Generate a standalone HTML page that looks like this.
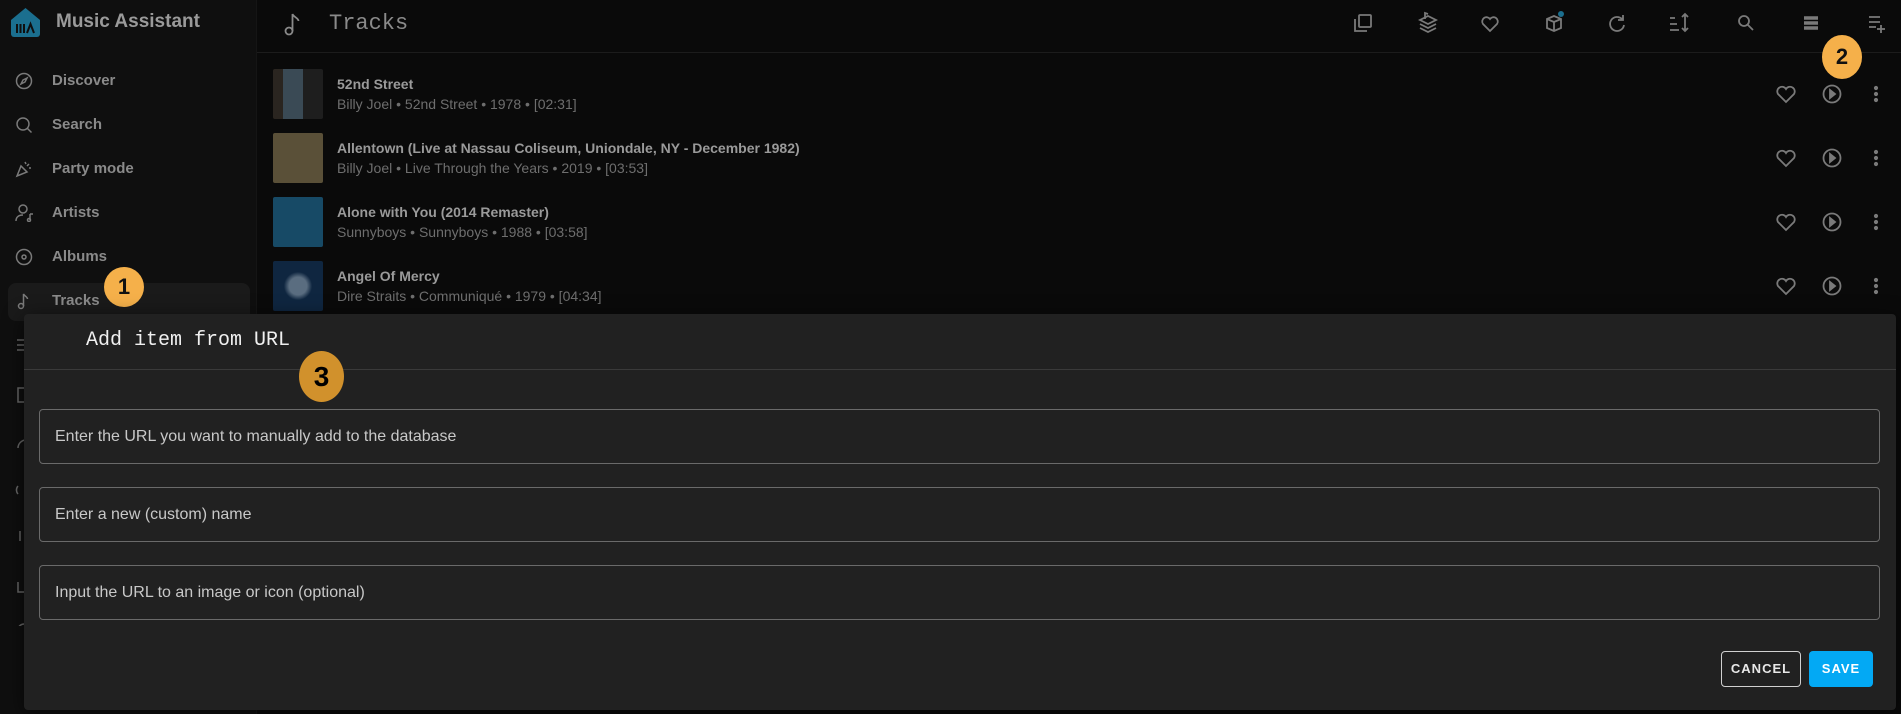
<!DOCTYPE html>
<html><head><meta charset="utf-8"><style>
*{margin:0;padding:0;box-sizing:border-box}
body{width:1901px;height:714px;background:#0a0a0a;font-family:"Liberation Sans",sans-serif;position:relative;overflow:hidden}
.abs{position:absolute}
.side{left:0;top:0;width:257px;height:714px;background:#0f0f0f;border-right:1px solid #151515}
.nav{position:absolute;left:52px;font-size:15px;font-weight:bold;color:#8a8a8a}
.badge{position:absolute;border-radius:50%;background:#f5b04a;color:#111;font-weight:bold;display:flex;align-items:center;justify-content:center;font-family:"Liberation Sans",sans-serif}
.thumb{position:absolute;left:273px;width:50px;height:50px;border-radius:2px}
.t1{position:absolute;left:337px;font-size:14px;font-weight:bold;color:#9a9a9a}
.t2{position:absolute;left:337px;font-size:14px;color:#6e6e6e}
svg{position:absolute}
.inp{position:absolute;left:39px;width:1841px;height:55px;border:1px solid #6a6a6a;border-radius:4px;font-size:16px;color:#c8c8c8;padding-left:15px;line-height:53px}
</style></head><body>
<div class="abs side"></div>
<svg style="left:10px;top:7px" width="31" height="30" viewBox="0 0 31 30"><path d="M15.5 1 L30 13 V27 a3 3 0 0 1 -3 3 H4 a3 3 0 0 1 -3 -3 V13Z" fill="#1b6f8f"/><path d="M7 17v9M10.5 17v9M14 17v9M17 26l3.5-9 3.5 9" stroke="#0f0f0f" stroke-width="2" fill="none"/></svg>
<div class="abs" style="left:56px;top:11px;font-size:19px;font-weight:bold;color:#9a9a9a">Music Assistant</div>
<div class="abs" style="left:8px;top:283px;width:242px;height:38px;background:#1a1a1a;border-radius:8px"></div>
<svg style="left:15px;top:72px" width="18" height="18" viewBox="0 0 18 18" fill="none" stroke="#7a7a7a" stroke-width="1.5"><circle cx="9" cy="9" r="7.5"/><path d="M12 6l-2 4-4 2 2-4z"/></svg>
<div class="nav" style="top:72px">Discover</div>
<svg style="left:15px;top:116px" width="18" height="18" viewBox="0 0 18 18" fill="none" stroke="#7a7a7a" stroke-width="1.5"><circle cx="8" cy="8" r="6"/><path d="M12.5 12.5l4 4"/></svg>
<div class="nav" style="top:116px">Search</div>
<svg style="left:15px;top:160px" width="18" height="18" viewBox="0 0 18 18" fill="none" stroke="#7a7a7a" stroke-width="1.5"><path d="M2 16l4-10 6 6z M10 2l1 2M14 4l-2 2M16 8h-2"/></svg>
<div class="nav" style="top:160px">Party mode</div>
<svg style="left:15px;top:204px" width="20" height="18" viewBox="0 0 20 18" fill="none" stroke="#7a7a7a" stroke-width="1.5"><circle cx="8" cy="5" r="4"/><path d="M1 17c0-4 3-6 7-6M15 10v6M15 10h3"/><circle cx="14" cy="16" r="1.5"/></svg>
<div class="nav" style="top:204px">Artists</div>
<svg style="left:15px;top:248px" width="18" height="18" viewBox="0 0 18 18" fill="none" stroke="#7a7a7a" stroke-width="1.5"><circle cx="9" cy="9" r="7.5"/><circle cx="9" cy="9" r="2"/></svg>
<div class="nav" style="top:248px">Albums</div>
<svg style="left:15px;top:292px" width="18" height="18" viewBox="0 0 18 18" fill="none" stroke="#7a7a7a" stroke-width="1.5"><circle cx="6" cy="14" r="2.5"/><path d="M8.5 14V2c1 2 4 3 4 5"/></svg>
<div class="nav" style="top:292px">Tracks</div>
<div class="badge" style="left:104px;top:267px;width:40px;height:40px;font-size:22px">1</div>
<div class="abs" style="left:257px;top:52px;width:1644px;height:1px;background:#1c1c1c"></div>
<svg style="left:283px;top:12px" width="20" height="24" viewBox="0 0 20 24" fill="none" stroke="#8a8a8a" stroke-width="1.8"><circle cx="6" cy="19" r="3.5"/><path d="M9.5 19V2c1 3 6 4 6 7"/></svg>
<div class="abs" style="left:329px;top:11px;font-family:'Liberation Mono',monospace;font-size:22px;color:#8a8a8a">Tracks</div>
<svg style="left:1340px;top:10px" width="561" height="28" viewBox="0 0 561 28" fill="none" stroke="#7a7a7a" stroke-width="1.8">
<g transform="translate(23,13)"><rect x="-4" y="-8" width="12" height="12" rx="1"/><path d="M-8 -4v12h12"/></g>
<g transform="translate(88,13)"><path d="M-8 -3l8 4 8-4-8-4z M-8 1l8 4 8-4 M-8 5l8 4 8-4"/><path d="M-3 -4v-6l3 1"/></g>
<g transform="translate(150,13)"><path d="M0 8l-7-7a4 4 0 0 1 7-5a4 4 0 0 1 7 5z"/></g>
<g transform="translate(214,13)"><path d="M-7 -4l7-3 7 3v9l-7 3-7-3z M-7 -4l7 3 7-3M0 -1v9"/></g>
<circle cx="221" cy="4" r="3" fill="#1b6f8f" stroke="none"/>
<g transform="translate(277,13)"><path d="M5 -4a7 7 0 1 0 2 6 M6 -8v5h-5"/></g>
<g transform="translate(339,13)"><path d="M-9 -5h5M-9 1h7M-9 7h9 M6 -9v17M3 -6l3-3 3 3M3 5l3 3 3-3"/></g>
<g transform="translate(406,13)"><circle cx="-2" cy="-2" r="5"/><path d="M2 2l5 5"/></g>
<g transform="translate(471,13)"><path d="M-7 -5h14M-7 0h14M-7 5h14" stroke-width="3.5"/></g>
<g transform="translate(537,13)"><path d="M-8 -6h11M-8 -1h11M-8 4h7M4 2v8M0 6h8"/></g>
</svg>
<div class="badge" style="left:1822px;top:35px;width:40px;height:44px;font-size:22px">2</div>
<div class="thumb" style="top:69px;background:linear-gradient(90deg,#2a2520 0 20%,#3a4a55 20% 60%,#1e1e1e 60%)"></div>
<div class="t1" style="top:76px">52nd Street</div>
<div class="t2" style="top:96px">Billy Joel • 52nd Street • 1978 • [02:31]</div>
<div class="thumb" style="top:133px;background:#5a5038"></div>
<div class="t1" style="top:140px">Allentown (Live at Nassau Coliseum, Uniondale, NY - December 1982)</div>
<div class="t2" style="top:160px">Billy Joel • Live Through the Years • 2019 • [03:53]</div>
<div class="thumb" style="top:197px;background:#174a66"></div>
<div class="t1" style="top:204px">Alone with You (2014 Remaster)</div>
<div class="t2" style="top:224px">Sunnyboys • Sunnyboys • 1988 • [03:58]</div>
<div class="thumb" style="top:261px;background:radial-gradient(#5a6d80 0 25%,#0f2640 40%)"></div>
<div class="t1" style="top:268px">Angel Of Mercy</div>
<div class="t2" style="top:288px">Dire Straits • Communiqué • 1979 • [04:34]</div>
<svg style="left:1700px;top:70px" width="200" height="240" viewBox="0 0 200 240" fill="none" stroke="#7a7a7a" stroke-width="1.8">
<g id="r"><path d="M86 32l-8-8a4.5 4.5 0 0 1 8-5a4.5 4.5 0 0 1 8 5z"/><circle cx="132" cy="24" r="8.5"/><path d="M130 20v8l5-4z" fill="#7a7a7a"/><circle cx="176" cy="18" r="1.2" fill="#7a7a7a"/><circle cx="176" cy="24" r="1.2" fill="#7a7a7a"/><circle cx="176" cy="30" r="1.2" fill="#7a7a7a"/></g>
<use href="#r" y="64"/><use href="#r" y="128"/><use href="#r" y="192"/>
</svg>
<svg style="left:14px;top:336px" width="12" height="290" viewBox="0 0 12 290" fill="none" stroke="#6a6a6a" stroke-width="1.5"><path d="M3 4h9M3 9h9M3 14h9"/><rect x="4" y="52" width="8" height="14"/><path d="M4 112a8 8 0 0 1 8-8"/><path d="M4 158a6 6 0 0 1 0-8"/><path d="M6 195v10"/><path d="M4 246v10h8"/><circle cx="10" cy="294" r="6"/></svg>
<div class="abs" style="left:24px;top:314px;width:1872px;height:396px;background:#212121;border-radius:4px;box-shadow:0 4px 20px rgba(0,0,0,.6)"></div>
<div class="abs" style="left:24px;top:369px;width:1872px;height:1px;background:#3a3a3a"></div>
<div class="abs" style="left:86px;top:329px;font-family:'Liberation Mono',monospace;font-size:20px;color:#f0f0f0">Add item from URL</div>
<div class="badge" style="left:299px;top:351px;width:45px;height:51px;background:#d1912c;font-size:28px;color:#000">3</div>
<div class="inp" style="top:409px">Enter the URL you want to manually add to the database</div>
<div class="inp" style="top:487px">Enter a new (custom) name</div>
<div class="inp" style="top:565px">Input the URL to an image or icon (optional)</div>
<div class="abs" style="left:1721px;top:651px;width:80px;height:36px;border:1px solid #d0d0d0;border-radius:4px;color:#e8e8e8;font-size:13px;font-weight:bold;letter-spacing:1px;text-align:center;line-height:34px">CANCEL</div>
<div class="abs" style="left:1809px;top:651px;width:64px;height:36px;background:#03a9f4;border-radius:4px;color:#fff;font-size:13px;font-weight:bold;letter-spacing:1px;text-align:center;line-height:36px">SAVE</div>
</body></html>
